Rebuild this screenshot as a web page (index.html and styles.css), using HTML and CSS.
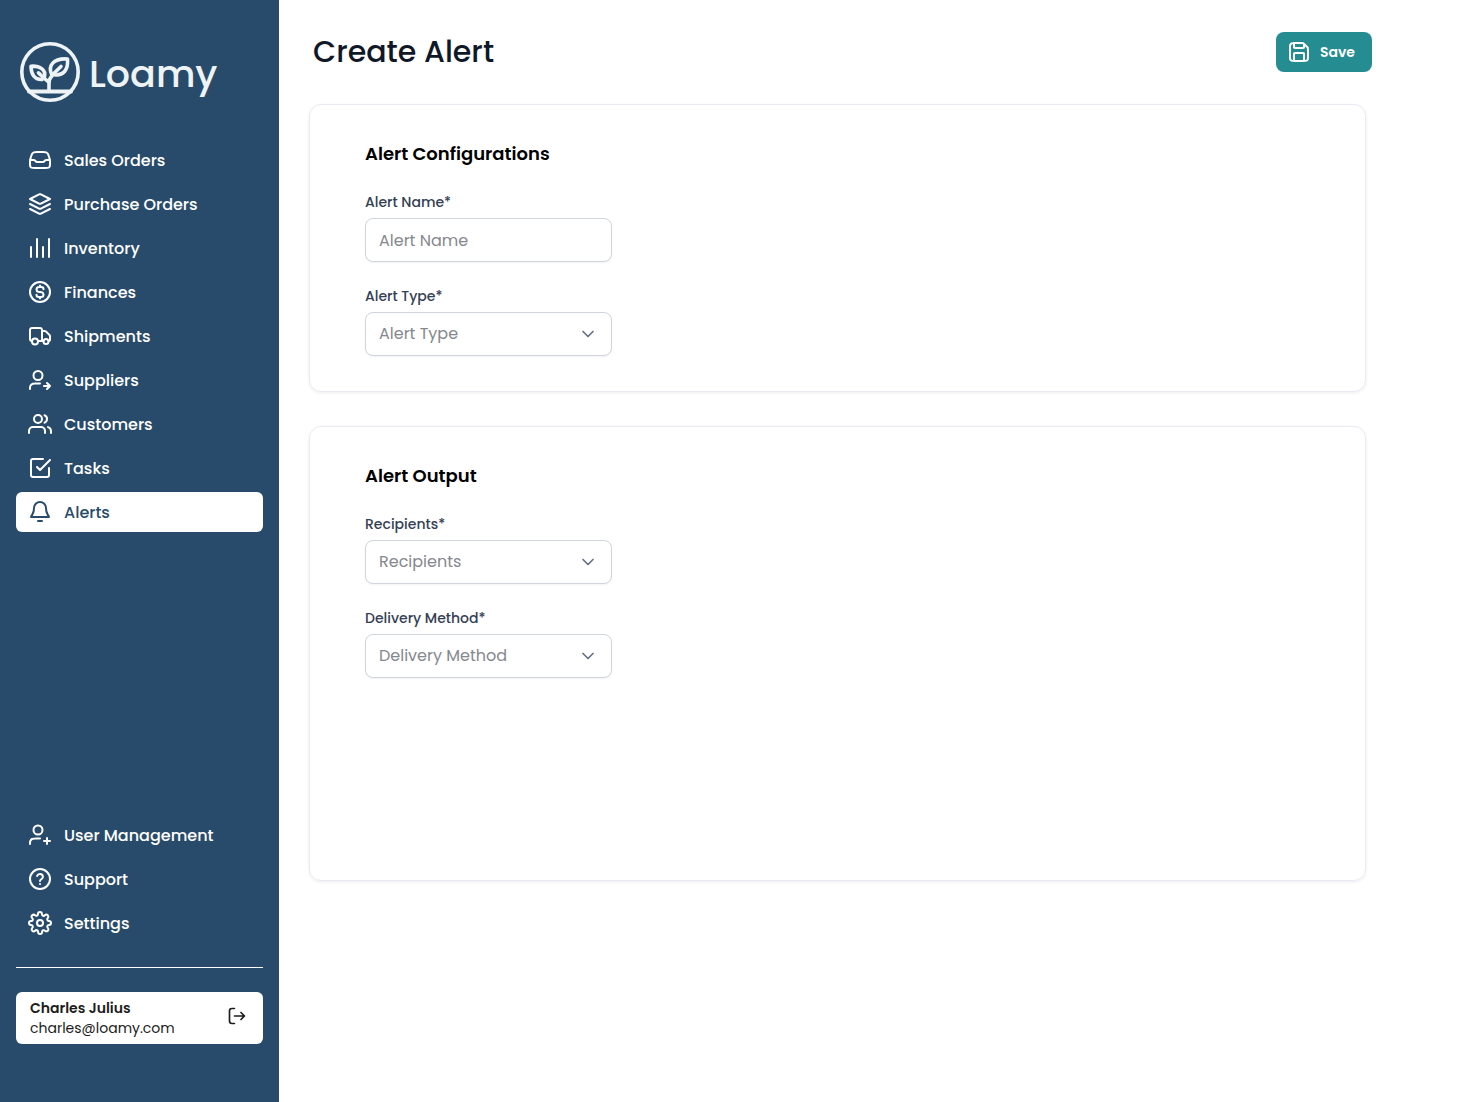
FILE: index.html
```html
<!DOCTYPE html>
<html lang="en">
<head>
    <meta charset="UTF-8">
    <meta name="viewport" content="width=device-width, initial-scale=1.0">
    <title>Create Alert - Loamy</title>
    <link rel="stylesheet" href="styles.css">
</head>
<body>
    <aside class="sidebar">
        <a href="#" class="logo">
            <svg class="logo-mark" viewBox="0 0 60 60" fill="none" stroke="currentColor" stroke-width="3.6" stroke-linecap="round" stroke-linejoin="round">
                <circle cx="30" cy="30" r="28.2"/>
                <path d="M9 49.500H51" stroke-width="4"/>
                <path d="M29 48V38"/>
                <path d="M29 39C30 35 33 32 41 24.500"/>
                <path d="M31.500 32C28 24 33 16 47.500 17C48.500 28 43 34 34.500 32.800"/>
                <path d="M29 40C26 38.500 22 34 18.500 30.800"/>
                <path d="M24.500 34.500C26 28 20 23.500 11 24.200C11 32 14.500 38 22 37.500"/>
            </svg>
            <span class="logo-text">Loamy</span>
        </a>

        <!-- Main navigation -->
        <nav class="nav">
            <a href="#" class="nav-item">
                <svg class="icon" viewBox="0 0 24 24"><path d="M2.500 12H5.900C6.600 12 7.200 12.400 7.500 13C7.800 13.600 8.400 14 9.100 14H14.900C15.600 14 16.200 13.600 16.500 13C16.800 12.400 17.400 12 18.100 12H21.500M9 4H15C16.700 4 17.500 4 18.200 4.300C18.800 4.600 19.300 5 19.700 5.500C20.100 6.100 20.400 6.900 20.900 8.500L21.600 10.700C21.800 11.300 21.900 11.600 22 12C22 12.300 22 12.600 22 13.300V15.200C22 16.900 22 17.700 21.700 18.400C21.400 18.900 20.900 19.400 20.400 19.700C19.700 20 18.900 20 17.200 20H6.800C5.100 20 4.300 20 3.600 19.700C3.100 19.400 2.600 18.900 2.300 18.400C2 17.700 2 16.900 2 15.200V13.300C2 12.600 2 12.300 2 12C2.100 11.600 2.200 11.300 2.400 10.700L3.100 8.500C3.600 6.900 3.900 6.100 4.300 5.500C4.700 5 5.200 4.600 5.800 4.300C6.500 4 7.300 4 9 4Z"/></svg>
                <span>Sales Orders</span>
            </a>
            <a href="#" class="nav-item">
                <svg class="icon" viewBox="0 0 24 24"><path d="M2 12L11.600 16.800C11.900 16.900 12.100 16.900 12.400 16.800L22 12M2 17L11.600 21.800C11.900 21.900 12.100 21.900 12.400 21.800L22 17M2 7L11.600 2.200C11.900 2.100 12.100 2.100 12.400 2.200L22 7L12.400 11.800C12.100 11.900 11.900 11.900 11.600 11.800Z"/></svg>
                <span>Purchase Orders</span>
            </a>
            <a href="#" class="nav-item">
                <svg class="icon" viewBox="0 0 24 24"><path d="M3 11V21M9 3V21M15 11V21M21 3V21"/></svg>
                <span>Inventory</span>
            </a>
            <a href="#" class="nav-item">
                <svg class="icon" viewBox="0 0 24 24"><circle cx="12" cy="12" r="10"/><path d="M8.500 14.700C8.500 16 9.500 17 10.800 17H13C14.400 17 15.500 15.900 15.500 14.500C15.500 13.300 14.800 12.600 13.800 12.300L10.200 11.700C9.200 11.400 8.500 10.700 8.500 9.500C8.500 8.100 9.600 7 11 7H13.200C14.500 7 15.500 8 15.500 9.300M12 5.500V7M12 17V18.500"/></svg>
                <span>Finances</span>
            </a>
            <a href="#" class="nav-item">
                <svg class="icon" viewBox="0 0 24 24"><path d="M14 7H16.300C16.800 7 17.100 7 17.300 7.100C17.600 7.200 17.900 7.400 18.200 7.700L21.400 10.900C21.600 11.200 21.800 11.400 21.900 11.700C22 12 22 12.200 22 12.700V15.500C22 16 22 16.200 21.900 16.400C21.800 16.600 21.600 16.800 21.400 16.900C21.200 17 21 17 20.500 17M15.500 17H14M14 17V7.200C14 6.100 14 5.500 13.800 5.100C13.600 4.700 13.300 4.400 12.900 4.200C12.500 4 11.900 4 10.800 4H5.200C4.100 4 3.500 4 3.100 4.200C2.700 4.400 2.400 4.700 2.200 5.100C2 5.500 2 6.100 2 7.200V15C2 16.100 2.900 17 4 17M14 17H10"/><circle cx="7" cy="17.500" r="3"/><circle cx="18" cy="17.500" r="2.500"/></svg>
                <span>Shipments</span>
            </a>
            <a href="#" class="nav-item">
                <svg class="icon" viewBox="0 0 24 24"><path d="M19 21L22 18M22 18L19 15M22 18H16M12 15.500H7.500C6.100 15.500 5.400 15.500 4.800 15.700C3.600 16.100 2.600 17.100 2.200 18.300C2 18.900 2 19.600 2 21"/><circle cx="10" cy="7.500" r="4.500"/></svg>
                <span>Suppliers</span>
            </a>
            <a href="#" class="nav-item">
                <svg class="icon" viewBox="0 0 24 24"><path d="M23 21V19C23 17.100 21.700 15.600 20 15.100M16.500 3.300C18 3.900 19 5.300 19 7C19 8.700 18 10.100 16.500 10.700M17 21V19C17 16.800 15.200 15 13 15H5C2.800 15 1 16.800 1 19V21"/><circle cx="10" cy="7" r="4"/></svg>
                <span>Customers</span>
            </a>
            <a href="#" class="nav-item">
                <svg class="icon" viewBox="0 0 24 24"><path d="M9 11L12 14L22 4M15 3H5C3.900 3 3 3.900 3 5V19C3 20.100 3.900 21 5 21H19C20.100 21 21 20.100 21 19V12"/></svg>
                <span>Tasks</span>
            </a>
            <a href="#" class="nav-item active" aria-current="page">
                <svg class="icon" viewBox="0 0 24 24"><path d="M10 21H14M18 8C18 4.700 15.300 2 12 2C8.700 2 6 4.700 6 8C6 11.100 5.200 13.200 4.300 14.600C3.300 16.100 3 16.600 3 17H21C21 16.600 20.700 16.100 19.700 14.600C18.800 13.200 18 11.100 18 8Z"/></svg>
                <span>Alerts</span>
            </a>
        </nav>

        <!-- Account links and the signed in user -->
        <div class="sidebar-footer">
            <nav class="nav">
                <a href="#" class="nav-item">
                    <svg class="icon" viewBox="0 0 24 24"><path d="M19 21V15M16 18H22M12 15.500H8C6.100 15.500 5.200 15.500 4.500 15.800C3.500 16.200 2.700 17 2.300 18C2 18.700 2 19.100 2 21"/><circle cx="10" cy="7" r="4.500"/></svg>
                    <span>User Management</span>
                </a>
                <a href="#" class="nav-item">
                    <svg class="icon" viewBox="0 0 24 24"><circle cx="12" cy="12" r="10"/><path d="M9.100 9C9.500 7.800 10.600 7 12 7C13.600 7 14.900 8.300 14.900 10C14.900 12 12 12.500 12 14M12 17H12.010"/></svg>
                    <span>Support</span>
                </a>
                <a href="#" class="nav-item">
                    <svg class="icon" viewBox="0 0 24 24"><circle cx="12" cy="12" r="3"/><path d="M19.400 15A1.650 1.650 0 0 0 19.730 16.820L19.790 16.880A2 2 0 1 1 16.960 19.710L16.900 19.650A1.650 1.650 0 0 0 14.080 20.830V21A2 2 0 0 1 10.080 21V20.910A1.650 1.650 0 0 0 7.180 19.730L7.120 19.790A2 2 0 1 1 4.290 16.960L4.350 16.900A1.650 1.650 0 0 0 3.170 14.080H3A2 2 0 0 1 3 10.080H3.090A1.650 1.650 0 0 0 4.270 7.180L4.210 7.120A2 2 0 1 1 7.040 4.290L7.100 4.350A1.650 1.650 0 0 0 9.920 3.170V3A2 2 0 0 1 13.920 3V3.090A1.650 1.650 0 0 0 16.820 4.270L16.880 4.210A2 2 0 1 1 19.710 7.040L19.650 7.100A1.650 1.650 0 0 0 20.830 9.920H21A2 2 0 0 1 21 13.920H20.910A1.650 1.650 0 0 0 19.400 15Z"/></svg>
                    <span>Settings</span>
                </a>
            </nav>
            <hr class="divider">
            <div class="user-card">
                <div class="user-info">
                    <div class="user-name">Charles Julius</div>
                    <div class="user-email">charles@loamy.com</div>
                </div>
                <button type="button" class="logout" aria-label="Log out">
                    <svg class="icon icon-small" viewBox="0 0 20 20"><path d="M14 13.500L17.500 10M17.500 10L14 6.500M17.500 10H7.500M7.500 2.500H5C3.200 2.500 2.500 3.200 2.500 5V15C2.500 16.800 3.200 17.500 5 17.500H7.500"/></svg>
                </button>
            </div>
        </div>
    </aside>

    <main class="main">
        <header class="page-header">
            <h1>Create Alert</h1>
            <button type="submit" form="alert-form" class="save-button">
                <svg class="icon" viewBox="0 0 24 24"><path d="M7 3V6.400C7 7 7 7.200 7.100 7.500C7.200 7.700 7.300 7.800 7.500 7.900C7.800 8 8 8 8.600 8H15.400C16 8 16.200 8 16.500 7.900C16.700 7.800 16.800 7.700 16.900 7.500C17 7.200 17 7 17 6.400V4M17 21V14.600C17 14 17 13.800 16.900 13.500C16.800 13.300 16.700 13.200 16.500 13.100C16.200 13 16 13 15.400 13H8.600C8 13 7.800 13 7.500 13.100C7.300 13.200 7.200 13.300 7.100 13.500C7 13.800 7 14 7 14.600V21M21 9.300V16.200C21 17.900 21 18.700 20.700 19.400C20.400 19.900 19.900 20.400 19.400 20.700C18.700 21 17.900 21 16.200 21H7.800C6.100 21 5.300 21 4.600 20.700C4.100 20.400 3.600 19.900 3.300 19.400C3 18.700 3 17.900 3 16.200V7.800C3 6.100 3 5.300 3.300 4.600C3.600 4.100 4.100 3.600 4.600 3.300C5.300 3 6.100 3 7.800 3H14.700C15.200 3 15.400 3 15.700 3.100C16.200 3.200 16.500 3.400 16.900 3.700L20.300 7.100C20.600 7.500 20.800 7.800 20.900 8.300C21 8.600 21 8.800 21 9.300Z"/></svg>
                <span>Save</span>
            </button>
        </header>

        <form id="alert-form" class="alert-form">
            <section class="card">
                <h2>Alert Configurations</h2>
                <div class="field">
                    <label for="alert-name">Alert Name*</label>
                    <input type="text" id="alert-name" class="control" placeholder="Alert Name">
                </div>
                <div class="field">
                    <label for="alert-type">Alert Type*</label>
                    <div class="select-wrap">
                        <select id="alert-type" class="control">
                            <option value="">Alert Type</option>
                        </select>
                        <svg class="icon icon-small chevron" viewBox="0 0 20 20"><path d="M5 7.500L10 12.500L15 7.500"/></svg>
                    </div>
                </div>
            </section>

            <section class="card card-tall">
                <h2>Alert Output</h2>
                <div class="field">
                    <label for="recipients">Recipients*</label>
                    <div class="select-wrap">
                        <select id="recipients" class="control">
                            <option value="">Recipients</option>
                        </select>
                        <svg class="icon icon-small chevron" viewBox="0 0 20 20"><path d="M5 7.500L10 12.500L15 7.500"/></svg>
                    </div>
                </div>
                <div class="field">
                    <label for="delivery-method">Delivery Method*</label>
                    <div class="select-wrap">
                        <select id="delivery-method" class="control">
                            <option value="">Delivery Method</option>
                        </select>
                        <svg class="icon icon-small chevron" viewBox="0 0 20 20"><path d="M5 7.500L10 12.500L15 7.500"/></svg>
                    </div>
                </div>
            </section>
        </form>
    </main>
</body>
</html>
```
FILE: styles.css
```css
* {
    box-sizing: border-box;
}
body {
    margin: 0;
    min-height: 100vh;
    display: flex;
    font-family: 'Poppins', 'Inter', sans-serif;
    font-feature-settings: 'cv11';
    font-size: 16px;
    line-height: 24px;
    color: #000;
    background: #fff;
}
h1, h2 {
    margin: 0;
}
button, input, select {
    font: inherit;
    font-feature-settings: inherit;
}
.icon {
    width: 24px;
    height: 24px;
    flex-shrink: 0;
    fill: none;
    stroke: currentColor;
    stroke-width: 2;
    stroke-linecap: round;
    stroke-linejoin: round;
}
.icon-small {
    width: 20px;
    height: 20px;
    stroke-width: 1.67;
}

/* Sidebar */
.sidebar {
    width: 279px;
    flex-shrink: 0;
    display: flex;
    flex-direction: column;
    padding: 42px 16px 58px;
    background: #284b6b;
    color: #fff;
}
.logo {
    display: flex;
    align-items: center;
    gap: 9px;
    padding: 0 4px;
    margin-bottom: 38px;
    color: #eef3f6;
    text-decoration: none;
}
.logo-mark {
    width: 60px;
    height: 60px;
}
.logo-text {
    padding-top: 4px;
    font-size: 38px;
    line-height: 56px;
    font-weight: 500;
}
.nav {
    display: flex;
    flex-direction: column;
    gap: 4px;
}
.nav-item {
    display: flex;
    align-items: center;
    gap: 12px;
    height: 40px;
    padding: 0 12px;
    border-radius: 6px;
    font-weight: 500;
    line-height: 25px;
    color: #fff;
    text-decoration: none;
}
.nav-item.active {
    background: #fff;
    color: #284b6b;
}
.sidebar-footer {
    margin-top: auto;
}
.divider {
    height: 1px;
    margin: 24px 0;
    border: none;
    background: #fff;
}
.user-card {
    display: flex;
    align-items: flex-start;
    justify-content: space-between;
    padding: 6px 16px 6px 14px;
    border-radius: 6px;
    background: #fff;
    color: #1c1c1c;
    font-size: 14px;
    line-height: 20px;
}
.user-name {
    font-weight: 600;
}
.logout {
    display: flex;
    padding: 8px 0;
    border: none;
    background: none;
    color: #1c1c1c;
    cursor: pointer;
}

/* Page */
.main {
    flex: 1;
    padding: 32px 88px 32px 30px;
}
.page-header {
    display: flex;
    align-items: center;
    justify-content: space-between;
    padding-left: 4px;
    margin-bottom: 32px;
}
.page-header h1 {
    font-size: 30px;
    line-height: 38px;
    font-weight: 500;
    color: #101828;
}
.save-button {
    display: flex;
    align-items: center;
    gap: 9px;
    height: 40px;
    padding: 0 17px 0 11px;
    border: none;
    border-radius: 8px;
    background: #258c92;
    color: #fff;
    font-size: 14px;
    font-weight: 600;
    cursor: pointer;
}
.alert-form {
    display: flex;
    flex-direction: column;
    gap: 34px;
    padding-right: 6px;
}
.card {
    padding: 35px 55px;
    border: 1px solid #eaeaf2;
    border-radius: 12px;
    box-shadow: 0 1px 3px rgba(16, 24, 40, 0.08);
}
.card-tall {
    min-height: 455px;
}
.card h2 {
    font-size: 18px;
    line-height: 28px;
    font-weight: 600;
}
.field {
    display: flex;
    flex-direction: column;
    gap: 6px;
    width: 247px;
    margin-top: 24px;
}
.field label {
    font-size: 14px;
    line-height: 20px;
    font-weight: 500;
    color: #344054;
}
.control {
    width: 100%;
    height: 44px;
    padding: 0 13px;
    border: 1px solid #d0d5dd;
    border-radius: 8px;
    background: #fff;
    color: #85888e;
    box-shadow: 0 1px 2px rgba(16, 24, 40, 0.05);
    appearance: none;
}
.control::placeholder {
    color: #85888e;
}
.select-wrap {
    position: relative;
}
.chevron {
    position: absolute;
    top: 12px;
    right: 14px;
    color: #667085;
    pointer-events: none;
}
```
